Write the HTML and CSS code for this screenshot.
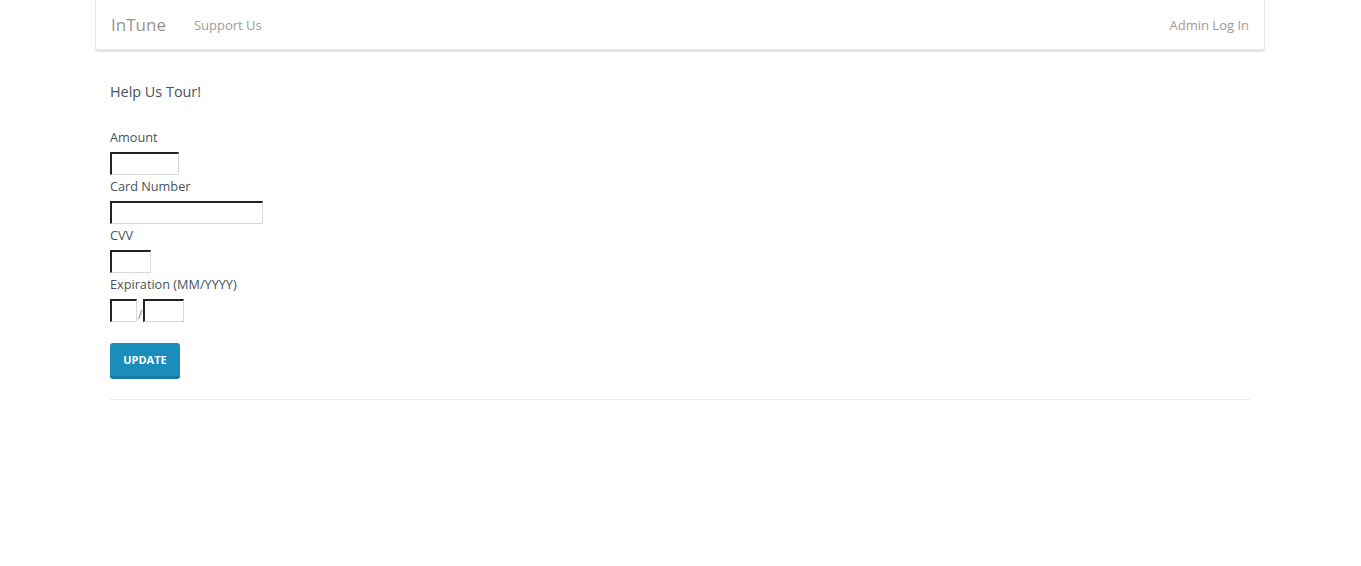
FILE: index.html
```
<html>
<head>
<title>InTune</title>
<link rel="stylesheet" href="styles.css">
</head>
<body>

<div class="navbar">
	<div class="navLeft">
		<a class="brand" href="#">InTune</a>
		<a class="navLink" href="#">Support Us</a>
	</div>
	<a class="navLink" href="#">Admin Log In</a>
</div>

<div class="content">
	<h3>Help Us Tour!</h3>
	<form class="payForm">
		<label>Amount</label>
		<input type="text" class="inAmount">
		<label>Card Number</label>
		<input type="text" class="inCard">
		<label>CVV</label>
		<input type="text" class="inCvv">
		<label>Expiration (MM/YYYY)</label>
		<div class="expRow">
			<input type="text" class="inMonth"><span>/</span><input type="text" class="inYear">
		</div>
		<button type="button" class="btnUpdate">Update</button>
	</form>
	<hr>
</div>

</body>
</html>
```

FILE: styles.css
```
body {
	margin: 0;
	padding-right: 1px;
	font-family: "Open Sans", sans-serif;
	color: #47525d;
	background: #fff;
}
a {
	text-decoration: none;
}
.navbar {
	margin: 0 auto;
	box-sizing: content-box;
	display: flex;
	justify-content: space-between;
	align-items: center;
	height: 49px;
	width: 1138px;
	padding: 0 15px;
	border: 1px solid #e6e6e6;
	border-top: none;
	border-bottom: 3px solid #e4e4e4;
	border-radius: 0 0 4px 4px;
}
.navLeft {
	display: flex;
	align-items: center;
}
.brand {
	font-size: 17px;
	color: #9a948e;
	margin-right: 28px;
}
.navLink {
	font-size: 13px;
	color: #a09a92;
}
.content {
	width: 1140px;
	margin: 0 auto;
}
h3 {
	font-size: 14.4px;
	font-weight: normal;
	margin: 0;
	padding-top: 30px;
	line-height: 20px;
	color: #475260;
}
.payForm {
	margin-top: 25px;
}
label {
	display: block;
	font-size: 12.7px;
	line-height: 20px;
	margin-top: 1px;
}
label:first-child {
	margin-top: 0;
}
input {
	display: block;
	box-sizing: border-box;
	height: 23px;
	margin: 5px 0 0;
	padding: 0 3px;
	border-style: solid;
	border-width: 2px 1px 1px 2px;
	border-color: #222 #d8d8d8 #d8d8d8 #222;
	background: #fff;
}
.inAmount { width: 69px; }
.inCard { width: 153px; }
.inCvv { width: 41px; }
.expRow {
	display: flex;
	align-items: flex-end;
	margin-top: 5px;
}
.expRow input {
	margin: 0;
}
.expRow span {
	font-size: 12px;
	line-height: 14px;
	color: #777;
	padding: 0 1px;
}
.inMonth { width: 27px; }
.inYear { width: 41px; }
.btnUpdate {
	display: block;
	margin-top: 21px;
	width: 70px;
	height: 36px;
	background: #1a8dbb;
	color: #fff;
	border: none;
	border-bottom: 3px solid #157ba3;
	border-radius: 3px;
	font-family: "Open Sans", sans-serif;
	font-weight: bold;
	font-size: 11px;
	text-transform: uppercase;
	padding: 0;
}
hr {
	border: none;
	border-top: 1px solid #eaeaea;
	margin: 20px 0 0;
}
```
